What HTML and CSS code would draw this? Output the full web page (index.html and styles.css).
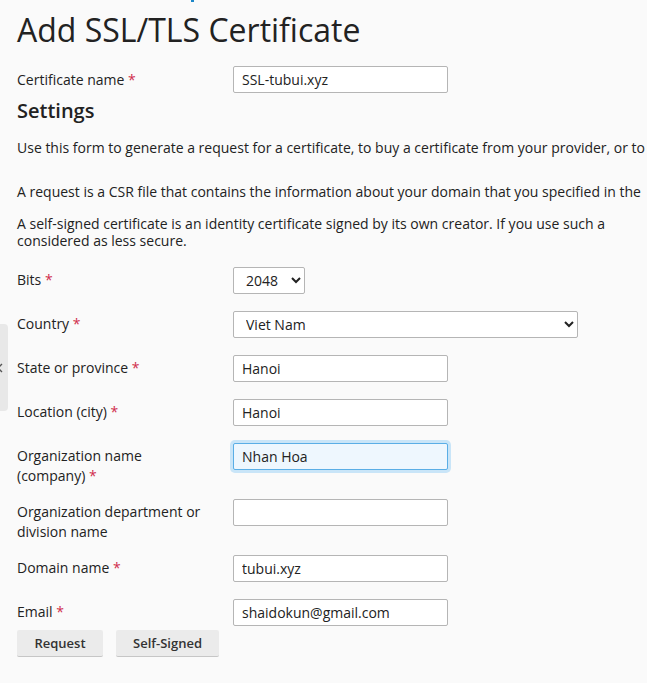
FILE: index.html
```html
<!DOCTYPE html>
<html lang="en">
<head>
<meta charset="utf-8">
<title>Add SSL/TLS Certificate</title>
<link rel="stylesheet" href="styles.css">
</head>
<body>
<div class="side-handle"><svg width="8" height="10" viewBox="0 0 8 10"><path d="M5 1 L1 5 L5 9" fill="none" stroke="#555" stroke-width="1.4"/></svg></div>
<div class="page">
  <div class="crumbs"><span class="crumb-mark"></span></div>
  <h1 class="title">Add SSL/TLS Certificate</h1>
  <div class="row first-row">
    <label class="lbl">Certificate name <span class="req">*</span></label>
    <input class="field" type="text" value="SSL-tubui.xyz">
  </div>
  <h2 class="section">Settings</h2>
  <p class="hint first">Use this form to generate a request for a certificate, to buy a certificate from your provider, or to</p>
  <p class="hint">A request is a CSR file that contains the information about your domain that you specified in the</p>
  <p class="hint wrap">A self-signed certificate is an identity certificate signed by its own creator. If you use such a<br>considered as less secure.</p>
  <div class="form">
    <div class="row">
      <label class="lbl">Bits <span class="req">*</span></label>
      <select class="sel bits"><option>2048</option></select>
    </div>
    <div class="row">
      <label class="lbl">Country <span class="req">*</span></label>
      <select class="sel country"><option>Viet Nam</option></select>
    </div>
    <div class="row">
      <label class="lbl">State or province <span class="req">*</span></label>
      <input class="field" type="text" value="Hanoi">
    </div>
    <div class="row">
      <label class="lbl">Location (city) <span class="req">*</span></label>
      <input class="field" type="text" value="Hanoi">
    </div>
    <div class="row">
      <label class="lbl">Organization name<br>(company) <span class="req">*</span></label>
      <input class="field focus" type="text" value="Nhan Hoa">
    </div>
    <div class="row">
      <label class="lbl">Organization department or<br>division name</label>
      <input class="field" type="text" value="">
    </div>
    <div class="row">
      <label class="lbl">Domain name <span class="req">*</span></label>
      <input class="field" type="text" value="tubui.xyz">
    </div>
    <div class="row last">
      <label class="lbl">Email <span class="req">*</span></label>
      <input class="field" type="text" value="shaidokun@gmail.com">
    </div>
  </div>
  <div class="buttons">
    <button class="btn req-btn">Request</button>
    <button class="btn self-btn">Self-Signed</button>
  </div>
</div>
</body>
</html>
```
FILE: styles.css
```css
html, body {
  margin: 0;
  padding: 0;
  background: #fafafa;
  overflow: hidden;
}
body {
  font-family: "Open Sans", "DejaVu Sans", sans-serif;
  color: #222;
  font-size: 14px;
  width: 647px;
  height: 683px;
  position: relative;
}
.page {
  padding-left: 17px;
  width: 620px;
}
.crumbs {
  height: 2px;
}
.crumb-mark {
  display: block;
  margin-left: 174px;
  width: 3px;
  height: 2px;
  background: #1d87c8;
}
.title {
  font-size: 32px;
  font-weight: 400;
  line-height: 40px;
  margin: 8px 0 16px 0;
  color: #222;
}
.row {
  display: flex;
  align-items: flex-start;
  min-height: 31px;
  margin-bottom: 13px;
}
.row.last {
  margin-bottom: 0;
}
.row.first-row {
  margin-bottom: 1px;
}
.lbl {
  width: 216px;
  flex: none;
  padding-top: 3px;
  line-height: 20px;
  font-size: 14px;
  color: #222;
}
.first-row .lbl {
  padding-top: 4px;
}
.req {
  color: #d02d4c;
}
.field {
  box-sizing: border-box;
  width: 215px;
  height: 27px;
  border: 1px solid #b5b5b5;
  border-radius: 2px;
  background: #fff;
  font-family: "Open Sans", sans-serif;
  font-size: 14px;
  color: #222;
  padding: 0 8px;
  margin: 0;
  outline: none;
}
.field.focus {
  background: #eef7fe;
  border-color: #5aaee6;
  box-shadow: 0 0 0 3px #c9e5f8;
}
.sel {
  box-sizing: border-box;
  height: 27px;
  border: 1px solid #b5b5b5;
  border-radius: 2px;
  background: #fff;
  font-family: "Open Sans", sans-serif;
  font-size: 14px;
  color: #222;
  padding: 0 4px;
  margin: 0;
}
.sel.bits {
  width: 72px;
  padding-left: 8px;
}
.sel.country {
  width: 345px;
  padding-left: 8px;
}
.section {
  font-size: 20px;
  font-weight: 600;
  line-height: 26px;
  margin: 0;
  color: #222;
}
.hint {
  font-size: 14px;
  line-height: 17px;
  margin: 15px 0 0 0;
  white-space: nowrap;
  color: #222;
}
.hint.first {
  margin-bottom: 27px;
}
.hint.first + .hint {
  margin-top: 0;
}
.form {
  margin-top: 18px;
}
.buttons {
  display: flex;
  gap: 13px;
  margin-top: 0;
}
.btn {
  box-sizing: border-box;
  height: 27px;
  background: #ebebeb;
  border: none;
  border-bottom: 1px solid #c6c6c6;
  border-radius: 2px;
  font-family: "Open Sans", sans-serif;
  font-size: 13px;
  font-weight: 600;
  color: #333;
  padding: 0;
}
.req-btn { width: 86px; }
.self-btn { width: 103px; }
.side-handle {
  position: absolute;
  left: -6px;
  top: 324px;
  width: 14px;
  height: 87px;
  background: #e8e8e8;
  border-radius: 4px;
  display: flex;
  align-items: center;
  justify-content: flex-start;
}
.side-handle svg {
  margin-left: 3px;
}
```
